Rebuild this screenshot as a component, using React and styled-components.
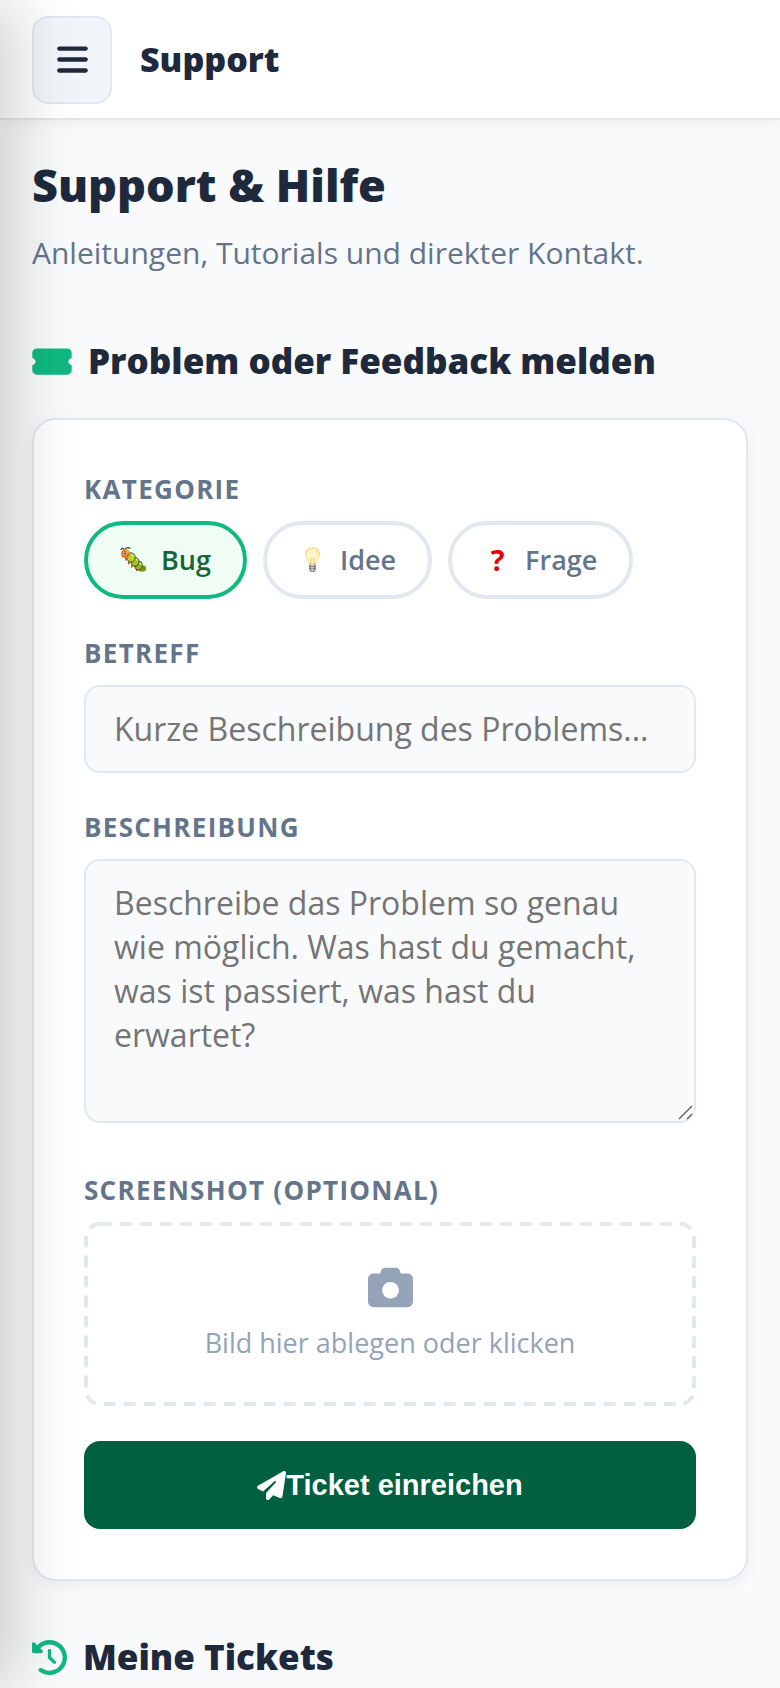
import { useState } from 'react';
import styled, { createGlobalStyle } from 'styled-components';
import { FaBars, FaTicketSimple, FaCamera, FaPaperPlane, FaClockRotateLeft } from 'react-icons/fa6';

const categories = [
    { id: 'bug', Icon: BugIcon, name: 'Bug' },
    { id: 'idee', Icon: BulbIcon, name: 'Idee' },
    { id: 'frage', Icon: QuestionIcon, name: 'Frage' },
];

export default function App(){
    const [category, setCategory] = useState('bug');
    const [subject, setSubject] = useState('');
    const [description, setDescription] = useState('');

    function sendTicket(event){
        event.preventDefault();
    }

    return(
        <>
            <GlobalStyle />
            <Sidebar aria-hidden='true' />
            <TopBar>
                <MenuButton type='button' aria-label='Menü'>
                    <FaBars />
                </MenuButton>
                <TopTitle>Support</TopTitle>
            </TopBar>

            <Content>
                <PageTitle>Support &amp; Hilfe</PageTitle>
                <Subtitle>Anleitungen, Tutorials und direkter Kontakt.</Subtitle>

                <SectionTitle $iconWidth={40}>
                    <FaTicketSimple />
                    Problem oder Feedback melden
                </SectionTitle>

                <TicketForm onSubmit={sendTicket}>
                    <Field>
                        <Label as='span' id='category-label'>Kategorie</Label>
                        <Chips role='group' aria-labelledby='category-label'>
                            {categories.map(({ id, Icon, name }) =>
                            <Chip
                                key={id}
                                type='button'
                                $active={id === category}
                                aria-pressed={id === category}
                                onClick={() => setCategory(id)}
                            >
                                <ChipIcon aria-hidden='true'><Icon /></ChipIcon>
                                {name}
                            </Chip>
                            )}
                        </Chips>
                    </Field>

                    <Field>
                        <Label htmlFor='subject'>Betreff</Label>
                        <Input
                            id='subject'
                            type='text'
                            placeholder='Kurze Beschreibung des Problems...'
                            value={subject}
                            onChange={(e) => setSubject(e.target.value)}
                        />
                    </Field>

                    <Field>
                        <Label htmlFor='description'>Beschreibung</Label>
                        <TextAreaBox>
                            <TextArea
                                id='description'
                                placeholder='Beschreibe das Problem so genau wie möglich. Was hast du gemacht, was ist passiert, was hast du erwartet?'
                                value={description}
                                onChange={(e) => setDescription(e.target.value)}
                            />
                            <ResizeHandle viewBox='0 0 15 15' aria-hidden='true'>
                                <path d='M1 14 14 1M9 14l5-5' />
                            </ResizeHandle>
                        </TextAreaBox>
                    </Field>

                    <Field>
                        <Label htmlFor='screenshot'>Screenshot (optional)</Label>
                        <DropZone>
                            <FileInput id='screenshot' type='file' accept='image/*' />
                            <DashedOutline aria-hidden='true'>
                                <rect />
                            </DashedOutline>
                            <CameraIcon />
                            Bild hier ablegen oder klicken
                        </DropZone>
                    </Field>

                    <SubmitButton type='submit'>
                        <FaPaperPlane />
                        Ticket einreichen
                    </SubmitButton>
                </TicketForm>

                <SectionTitle $iconWidth={35}>
                    <FaClockRotateLeft />
                    Meine Tickets
                </SectionTitle>
            </Content>
        </>
    );
}

function BugIcon(){
    return(
        <svg viewBox='0 0 27 27'>
            <path d='M1 3.5c1-1.6 2.6-1.5 3.5.5M5.5 3c1-1.7 3.5-1.8 4.5-.5' fill='none' stroke='#3b3a2e' strokeWidth='1.1' strokeLinecap='round' />
            <path d='M6 11v3M10 15l-1.5 2.5M13 18l-1.5 3M17 21.5l-.5 3' fill='none' stroke='#c2410c' strokeWidth='1.5' strokeLinecap='round' />
            <ellipse cx='22' cy='22.5' rx='4.2' ry='3.2' fill='#7d9418' />
            <ellipse cx='18.5' cy='19.5' rx='3.8' ry='4.3' fill='#94b41f' stroke='#37400f' strokeWidth='.9' />
            <ellipse cx='15' cy='15.8' rx='3.8' ry='4.3' fill='#a5c727' stroke='#37400f' strokeWidth='.9' />
            <ellipse cx='11' cy='11.5' rx='4.2' ry='4.6' fill='#b5d52f' stroke='#37400f' strokeWidth='.9' />
            <path d='M11.5 8.5c1.2.3 2 1.1 2.3 2M16 13c1 .4 1.5 1 1.8 1.8M19.5 17c.9.4 1.3.9 1.6 1.6' fill='none' stroke='#e2f07a' strokeWidth='1.2' strokeLinecap='round' />
            <circle cx='5.5' cy='7.8' r='4.5' fill='#e8742a' />
            <path d='M5.5 3.3a4.5 4.5 0 0 1 4.2 3L7 7z' fill='#c9c62e' />
            <circle cx='5' cy='7.5' r='1.6' fill='#fff' />
            <circle cx='5' cy='7.6' r='1' fill='#2b1608' />
        </svg>
    );
}

function BulbIcon(){
    return(
        <svg viewBox='0 0 27 27'>
            <defs>
                <radialGradient id='bulb-glass' cx='50%' cy='48%' r='55%'>
                    <stop offset='0' stopColor='#fffbe2' />
                    <stop offset='.65' stopColor='#fff0b8' />
                    <stop offset='1' stopColor='#ecd07c' />
                </radialGradient>
                <linearGradient id='bulb-base'>
                    <stop offset='0' stopColor='#777' />
                    <stop offset='.45' stopColor='#e5e5e5' />
                    <stop offset='1' stopColor='#777' />
                </linearGradient>
            </defs>
            <path d='M13.5 1C8.900 1 6 4.300 6 8.300c0 4.200 3.300 6.100 4 10.700h7c.7-4.600 4-6.500 4-10.700C21 4.300 18.100 1 13.500 1z' fill='url(#bulb-glass)' />
            <path d='M12 18v-6.500l1.500 1 1.500-1V18' fill='none' stroke='#e7c56d' strokeWidth='.7' />
            <path d='M10.200 18.500h6.600v5.300L15.500 26h-4l-1.300-2.200z' fill='url(#bulb-base)' />
            <path d='M10.200 20.600h6.600M10.200 22.800h6.600M11.700 25.500h3.600' stroke='#666' strokeWidth='.7' />
        </svg>
    );
}

function QuestionIcon(){
    return <QuestionMark>?</QuestionMark>;
}

const GlobalStyle = createGlobalStyle`
    * {
        box-sizing: border-box;
    }

    body {
        margin: 0;
        min-height: 100vh;
        background: #f8fafc;
        color: #1e293b;
        font-family: 'Open Sans', sans-serif;
        font-size: 32px;
    }
`

const Sidebar = styled.aside`
    position: fixed;
    top: 0;
    left: -520px;
    width: 520px;
    height: 100vh;
    z-index: 10;
    pointer-events: none;
    box-shadow: 16px 0 60px rgba(0, 0, 0, 0.18);
`

const TopBar = styled.header`
    position: relative;
    display: flex;
    align-items: center;
    gap: 28px;
    padding: 16px 32px 14px;
    background: #fff;
    border-bottom: 2px solid #e4e7ea;
    box-shadow: 0 2px 16px rgba(0, 0, 0, 0.06);
`

const MenuButton = styled.button`
    display: flex;
    align-items: center;
    justify-content: center;
    width: 80px;
    height: 88px;
    padding: 0 0 2px;
    background: #f1f5f9;
    border: 2px solid #e2e8f0;
    border-radius: 16px;
    color: #1e293b;
    font-size: 35px;
    cursor: pointer;
`

const TopTitle = styled.span`
    padding-bottom: 2px;
    font-size: 34px;
    font-weight: 800;
`

const Content = styled.main`
    padding: 34px 32px 0;
`

const PageTitle = styled.h1`
    margin: 0 0 17px;
    font-size: 45px;
    font-weight: 800;
    line-height: 62px;
`

const Subtitle = styled.p`
    margin: 0 0 64px;
    color: #64748b;
    font-size: 30px;
    line-height: 40px;
`

const SectionTitle = styled.h2`
    display: flex;
    align-items: center;
    gap: 16px;
    margin: 0;
    font-size: 35px;
    font-weight: 800;
    line-height: 48px;

    svg {
        flex: none;
        width: ${({ $iconWidth }) => $iconWidth}px;
        height: 35px;
        color: #10b981;
    }
`

const TicketForm = styled.form`
    margin: 33px 0 52px;
    padding: 50px;
    background: #fff;
    border: 2px solid #e2e8f0;
    border-radius: 24px;
    box-shadow: 0 4px 16px rgba(0, 0, 0, 0.05);
`

const Field = styled.div`
    margin-bottom: 35px;
`

const Label = styled.label`
    display: block;
    margin-bottom: 13px;
    color: #64748b;
    font-size: 26px;
    font-weight: 700;
    line-height: 38px;
    letter-spacing: 0.05em;
    text-transform: uppercase;
`

const Chips = styled.div`
    display: flex;
    flex-wrap: wrap;
    gap: 16px;
`

const Chip = styled.button`
    display: flex;
    align-items: center;
    gap: 14px;
    height: 78px;
    padding: 0 32px 2px;
    background: ${({ $active }) => $active ? '#f0fdf4' : '#fff'};
    border: 4px solid ${({ $active }) => $active ? '#10b981' : '#e2e8f0'};
    border-radius: 39px;
    color: ${({ $active }) => $active ? '#166534' : '#64748b'};
    font-family: inherit;
    font-size: 27px;
    font-weight: 600;
    cursor: pointer;
`

const ChipIcon = styled.span`
    display: flex;
    align-items: center;
    justify-content: center;
    width: 27px;
    height: 27px;

    svg {
        width: 27px;
        height: 27px;
    }
`

const QuestionMark = styled.span`
    color: #e60000;
    font-size: 29px;
    font-weight: 700;
    line-height: 27px;
`

const Input = styled.input`
    display: block;
    width: 100%;
    height: 88px;
    padding: 0 28px 2px;
    background: #f8fafc;
    border: 2px solid #e2e8f0;
    border-radius: 16px;
    color: #1e293b;
    font-family: inherit;
    font-size: 32px;

    &::placeholder {
        color: #757575;
    }
`

const TextAreaBox = styled.div`
    position: relative;
    margin-bottom: 48px;
`

const TextArea = styled.textarea`
    display: block;
    width: 100%;
    height: 264px;
    padding: 20px 28px;
    background: #f8fafc;
    border: 2px solid #e2e8f0;
    border-radius: 16px;
    color: #1e293b;
    font-family: inherit;
    font-size: 32px;
    line-height: 44px;
    resize: vertical;

    &::placeholder {
        color: #757575;
    }

    &::-webkit-resizer {
        background: transparent;
    }
`

const ResizeHandle = styled.svg`
    position: absolute;
    right: 3px;
    bottom: 3px;
    width: 15px;
    height: 15px;
    pointer-events: none;
    fill: none;
    stroke: #555;
    stroke-width: 1.2;
`

const DropZone = styled.label`
    position: relative;
    display: flex;
    flex-direction: column;
    align-items: center;
    gap: 14px;
    padding: 43px 32px 44px;
    border-radius: 16px;
    color: #94a3b8;
    font-size: 27px;
    line-height: 38px;
    cursor: pointer;
`

const DashedOutline = styled.svg`
    position: absolute;
    top: 0;
    left: 0;
    width: 100%;
    height: 100%;

    rect {
        x: 2px;
        y: 2px;
        rx: 14px;
        width: calc(100% - 4px);
        height: calc(100% - 4px);
        fill: none;
        stroke: #e2e8f0;
        stroke-width: 4px;
        stroke-dasharray: 12 8;
    }
`

const CameraIcon = styled(FaCamera)`
    width: 45px;
    height: 45px;
`

const FileInput = styled.input`
    position: absolute;
    width: 1px;
    height: 1px;
    opacity: 0;
`

const SubmitButton = styled.button`
    display: flex;
    align-items: center;
    justify-content: center;
    width: 100%;
    height: 88px;
    padding: 0;
    background: #006040;
    border: 0;
    border-radius: 16px;
    color: #fff;
    font-family: 'Liberation Sans', sans-serif;
    font-size: 29px;
    font-weight: 700;
    cursor: pointer;
`
